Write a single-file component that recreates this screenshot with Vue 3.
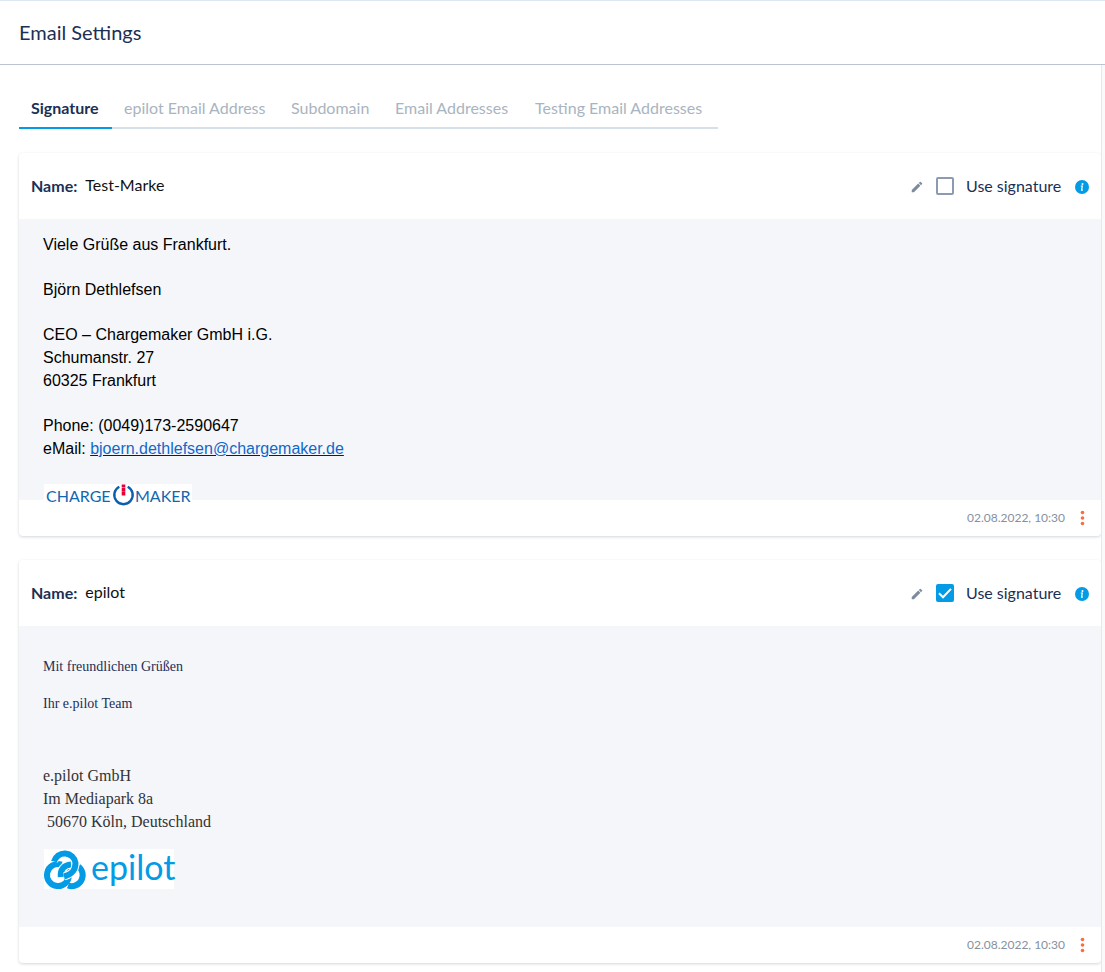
<script setup>
import { ref } from 'vue'

const tabs = ['Signature', 'epilot Email Address', 'Subdomain', 'Email Addresses', 'Testing Email Addresses']
const activeTab = ref('Signature')
const signatures = ref([
  { id: 'brand', name: 'Test-Marke', used: false, date: '02.08.2022, 10:30' },
  { id: 'epilot', name: 'epilot', used: true, date: '02.08.2022, 10:30' },
])
</script>

<template>
  <div class="page">
    <header class="topbar">
      <h1>Email Settings</h1>
    </header>
    <div class="scroll-area">
      <main>
        <nav class="tabs" role="tablist">
          <button
            v-for="tab in tabs"
            :key="tab"
            type="button"
            role="tab"
            class="tab"
            :class="{ active: tab === activeTab }"
            :aria-selected="tab === activeTab"
            @click="activeTab = tab"
          >{{ tab }}</button>
        </nav>

        <article v-for="item in signatures" :key="item.id" class="card">
          <div class="card-head">
            <span class="label">Name:</span>
            <span class="name">{{ item.name }}</span>
            <button type="button" class="icon-button edit" aria-label="Edit signature">
              <svg viewBox="0 0 24 24" width="14" height="14"><path fill="#7c8b9f" d="M3 17.25V21h3.75L17.81 9.94l-3.75-3.75L3 17.25zM20.71 7.04a1 1 0 0 0 0-1.41l-2.34-2.34a1 1 0 0 0-1.41 0l-1.83 1.83 3.75 3.75 1.83-1.83z" /></svg>
            </button>
            <span class="check-box">
              <input :id="'use-' + item.id" v-model="item.used" type="checkbox" class="check" />
              <svg v-if="item.used" class="tick" viewBox="0 0 18 18" width="18" height="18"><path d="M3 9.300l4 4 8-8.400" fill="none" stroke="#fff" stroke-width="2" /></svg>
            </span>
            <label :for="'use-' + item.id">Use signature</label>
            <button type="button" class="icon-button info" aria-label="Information">
              <svg viewBox="0 0 14 14" width="14" height="14">
                <circle cx="7" cy="7" r="7" fill="#039be5" />
                <circle cx="7.5" cy="3.9" r="1" fill="#fff" />
                <path d="M5.8 6h1.5l-.7 4.1h1.3" fill="none" stroke="#fff" stroke-width="1.2" />
              </svg>
            </button>
          </div>

          <div v-if="item.id === 'brand'" class="content sans">
            <p>Viele Grüße aus Frankfurt.</p>
            <p>Björn Dethlefsen</p>
            <p>CEO – Chargemaker GmbH i.G.<br />Schumanstr. 27<br />60325 Frankfurt</p>
            <p>Phone: (0049)173-2590647<br />eMail: <a href="mailto:bjoern.dethlefsen@chargemaker.de">bjoern.dethlefsen@chargemaker.de</a></p>
            <svg class="charge-logo" viewBox="0 0 148 22" width="148" height="22" role="img" aria-label="Chargemaker">
              <rect width="148" height="22" fill="#fff" />
              <text x="2" y="18" class="charge-text">CHARGE</text>
              <text x="91" y="18" class="charge-text">MAKER</text>
              <path d="M75.3 2.8a9.2 9.2 0 1 0 8.4 0" fill="none" stroke="#0b5fae" stroke-width="2.4" />
              <path d="M79.5 .4v3.2M79.5 4v3.2M79.5 7.6v3.8" stroke="#e4003a" stroke-width="3.6" />
            </svg>
          </div>

          <div v-else class="content serif">
            <p class="greeting">Mit freundlichen Grüßen</p>
            <p class="greeting">Ihr e.pilot Team</p>
            <p class="address">e.pilot GmbH<br />Im Mediapark 8a<br />&nbsp;50670 Köln, Deutschland</p>
            <svg class="epilot-logo" viewBox="0 0 130 40" width="130" height="40" role="img" aria-label="epilot">
              <rect width="130" height="40" fill="#fff" />
              <g fill="none" stroke="#039be5" stroke-width="6">
                <path d="M34.500 17.500A11 11 0 0 1 24 36.500" />
                <path d="M17.500 15.600A11 11 0 1 0 25 26Q25 22.500 28 19.500" />
                <path d="M27 15.500C20 16 16 20.500 16.800 28" stroke="#fff" stroke-width="8" />
                <path d="M27 15.500C20 16 16 20.500 16.800 28" />
                <path d="M10 12.500A11 11 0 0 1 31.500 14C31.500 22 27.500 25.500 20 27.500" stroke="#fff" stroke-width="8" />
                <path d="M10 12.500A11 11 0 0 1 31.500 14C31.500 22 27.500 25.500 20 27.500" />
              </g>
              <text x="47" y="31" class="epilot-text">epilot</text>
            </svg>
          </div>

          <footer class="card-foot">
            <time datetime="2022-08-02T10:30">{{ item.date }}</time>
            <button type="button" class="icon-button" aria-label="More options">
              <svg viewBox="0 0 14 22" width="14" height="22" fill="#ff6b3d">
                <circle cx="7.500" cy="5.500" r="1.8" /><circle cx="7.500" cy="11" r="1.8" /><circle cx="7.500" cy="16.500" r="1.8" />
              </svg>
            </button>
          </footer>
        </article>
      </main>
      <div class="track"></div>
    </div>
  </div>
</template>

<style>
body {
  margin: 0;
  background: #fff;
}
</style>

<style scoped>
* {
  box-sizing: border-box;
}
.page {
  display: flex;
  flex-direction: column;
  min-height: 100vh;
  border-top: 1px solid #dbe7f5;
  font-family: Lato, "Liberation Sans", sans-serif;
  font-size: 16px;
  color: #1c2f55;
}
.topbar {
  display: flex;
  align-items: center;
  height: 64px;
  padding: 0 0 2px 19px;
  border-bottom: 1px solid #bcc4d2;
}
h1 {
  margin: 0;
  font-size: 20px;
  font-weight: 400;
}
.scroll-area {
  display: flex;
  flex: 1;
}
main {
  flex: 1;
  display: flex;
  flex-direction: column;
  gap: 24px;
  padding: 24px 0 8px 19px;
  min-width: 0;
}
.track {
  width: 4px;
  background: #fafafa;
  border-left: 1px solid #e8e8e8;
}
.tabs {
  display: grid;
  grid-template-columns: 93px 167px 104px 140px 195px;
  align-self: flex-start;
}
.tab {
  height: 40px;
  padding: 0 0 2px 12px;
  border: 0;
  border-bottom: 2px solid #d5e0e8;
  background: none;
  font: inherit;
  text-align: left;
  color: #a9b4c0;
  white-space: nowrap;
}
.tab.active {
  border-bottom-color: #039be5;
  color: #1c2f55;
  font-weight: 700;
}
.card {
  border-radius: 4px;
  background: #fff;
  box-shadow: 0 1px 3px rgba(30, 50, 80, 0.2);
}
.card-head {
  display: flex;
  align-items: center;
  height: 66px;
  padding: 0 12px;
}
.label {
  margin-right: 8px;
  padding-bottom: 2px;
  font-weight: 700;
}
.name {
  padding-bottom: 4px;
  color: #111;
}
.icon-button {
  display: flex;
  padding: 0;
  border: 0;
  background: none;
}
.edit {
  margin-left: auto;
  margin-right: 12px;
  padding-top: 2px;
}
.info {
  padding-top: 2px;
}
.check-box {
  position: relative;
  display: flex;
  margin-right: 12px;
}
.check {
  appearance: none;
  width: 18px;
  height: 18px;
  margin: 0;
  border: 2px solid #8c9bb2;
  border-radius: 2px;
}
.check:checked {
  border-color: #039be5;
  background: #039be5;
}
.tick {
  position: absolute;
  inset: 0;
  pointer-events: none;
}
label {
  min-width: 97px;
  margin-right: 12px;
  padding-bottom: 2px;
}
.content {
  display: flex;
  flex-direction: column;
  background: #f5f6fa;
  line-height: 23px;
}
.content p {
  margin: 0;
}
.content svg {
  display: block;
  margin-left: 1px;
  overflow: visible;
}
.sans {
  gap: 22px;
  padding: 14px 24px 0;
  font-family: "Liberation Sans", Arial, sans-serif;
  color: #000;
}
.sans a {
  color: #1068c9;
  text-decoration-color: #0000ee;
}
.charge-logo {
  position: relative;
  margin-top: 2px;
  margin-bottom: -6px;
}
.charge-text {
  font: 16px Lato, sans-serif;
  fill: #1267b0;
}
.serif {
  padding: 29px 24px 38px;
  font-family: "Liberation Serif", "Times New Roman", serif;
}
.content .greeting {
  margin-bottom: 14px;
  font-size: 14px;
}
.content .address {
  margin: 35px 0 16px;
  color: #333;
}
.epilot-text {
  font: 34px Lato, sans-serif;
  fill: #039be5;
}
.card-foot {
  display: flex;
  align-items: center;
  justify-content: flex-end;
  gap: 10px;
  height: 36px;
  padding-right: 12px;
}
time {
  padding-bottom: 2px;
  font-size: 12px;
  color: #8591a2;
}
</style>
